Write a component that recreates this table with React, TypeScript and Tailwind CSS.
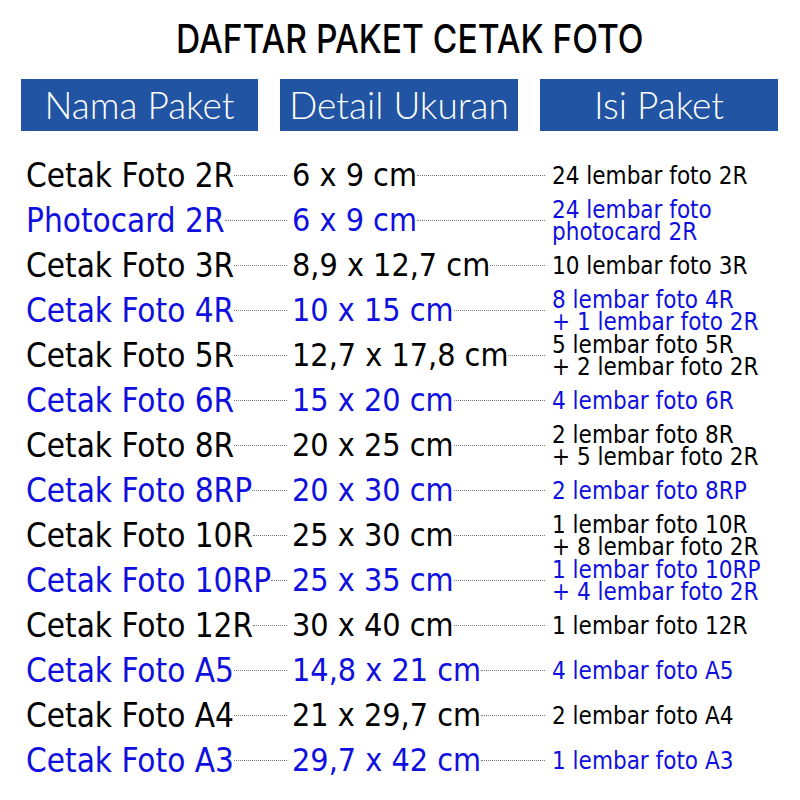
const rows: { name: string; size: string; isi: string[] }[] = [
  { name: "Cetak Foto 2R", size: "6 x 9 cm", isi: ["24 lembar foto 2R"] },
  { name: "Photocard 2R", size: "6 x 9 cm", isi: ["24 lembar foto", "photocard 2R"] },
  { name: "Cetak Foto 3R", size: "8,9 x 12,7 cm", isi: ["10 lembar foto 3R"] },
  { name: "Cetak Foto 4R", size: "10 x 15 cm", isi: ["8 lembar foto 4R", "+ 1 lembar foto 2R"] },
  { name: "Cetak Foto 5R", size: "12,7 x 17,8 cm", isi: ["5 lembar foto 5R", "+ 2 lembar foto 2R"] },
  { name: "Cetak Foto 6R", size: "15 x 20 cm", isi: ["4 lembar foto 6R"] },
  { name: "Cetak Foto 8R", size: "20 x 25 cm", isi: ["2 lembar foto 8R", "+ 5 lembar foto 2R"] },
  { name: "Cetak Foto 8RP", size: "20 x 30 cm", isi: ["2 lembar foto 8RP"] },
  { name: "Cetak Foto 10R", size: "25 x 30 cm", isi: ["1 lembar foto 10R", "+ 8 lembar foto 2R"] },
  { name: "Cetak Foto 10RP", size: "25 x 35 cm", isi: ["1 lembar foto 10RP", "+ 4 lembar foto 2R"] },
  { name: "Cetak Foto 12R", size: "30 x 40 cm", isi: ["1 lembar foto 12R"] },
  { name: "Cetak Foto A5", size: "14,8 x 21 cm", isi: ["4 lembar foto A5"] },
  { name: "Cetak Foto A4", size: "21 x 29,7 cm", isi: ["2 lembar foto A4"] },
  { name: "Cetak Foto A3", size: "29,7 x 42 cm", isi: ["1 lembar foto A3"] },
];

function Leader() {
  return <div className="flex-1 min-w-[6px] border-t border-dotted border-[#777]" />;
}

export default function App() {
  return (
    <div className="w-[800px] h-[800px] bg-white overflow-hidden">
      <div className="pt-[17px] pl-[20px] h-[62px] text-center">
        <h1 className="inline-block scale-x-[0.86] text-[39px] leading-[44px] font-medium text-black uppercase [font-family:Inter,sans-serif]">
          Daftar Paket Cetak Foto
        </h1>
      </div>

      <div className="mt-[17px] flex gap-[22px] px-[21px] text-white [font-family:Lato,sans-serif] font-light text-[37px] leading-[52px]">
        <div className="w-[237px] h-[52px] bg-[#2254a4] text-center">Nama Paket</div>
        <div className="w-[238px] h-[52px] bg-[#2254a4] text-center">Detail Ukuran</div>
        <div className="w-[238px] h-[52px] bg-[#2254a4] text-center">Isi Paket</div>
      </div>

      <div className="mt-[22px] pl-[26px] [font-family:'DejaVu_Sans_Condensed','DejaVu_Sans',sans-serif]">
        {rows.map((r, i) => (
          <div
            key={r.name}
            className={`h-[45px] grid grid-cols-[266px_260px_1fr] items-center ${
              i % 2 === 1 ? "text-[#0f0fe0]" : "text-black"
            }`}
          >
            <div className="flex items-center pr-[5px] text-[33px] leading-[45px]">
              <span className="whitespace-nowrap">{r.name}</span>
              <Leader />
            </div>
            <div className="flex items-center pr-[7px] text-[32px] leading-[45px]">
              <span className="whitespace-nowrap">{r.size}</span>
              <Leader />
            </div>
            <div className="text-[24px] leading-[22px] whitespace-nowrap">
              {r.isi.map((l) => (
                <div key={l}>{l}</div>
              ))}
            </div>
          </div>
        ))}
      </div>
    </div>
  );
}
